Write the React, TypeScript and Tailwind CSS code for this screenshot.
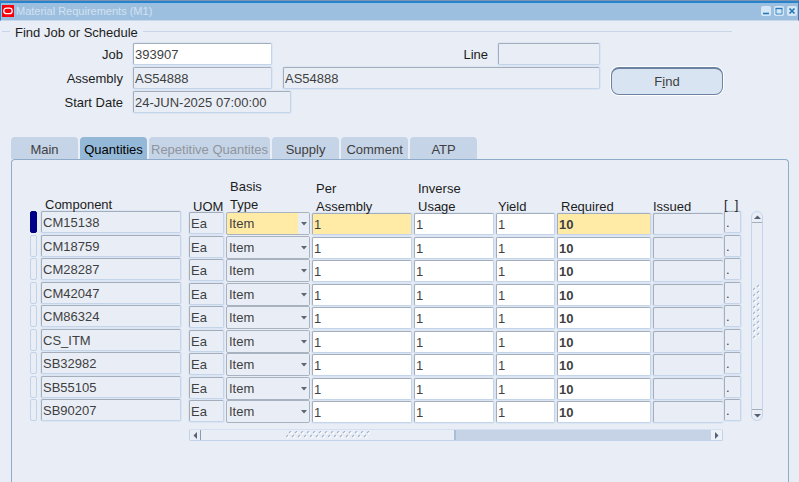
import { useState } from 'react'
import clsx from 'clsx'

const components = [
  'CM15138',
  'CM18759',
  'CM28287',
  'CM42047',
  'CM86324',
  'CS_ITM',
  'SB32982',
  'SB55105',
  'SB90207',
]

const tabs = [
  { label: 'Main' },
  { label: 'Quantities' },
  { label: 'Repetitive Quantites', disabled: true },
  { label: 'Supply' },
  { label: 'Comment' },
  { label: 'ATP' },
]

interface FieldProps {
  id?: string
  label?: string
  value?: string
  tone?: 'plain' | 'white' | 'required'
  className?: string
}

function Field({ id, label, value = '', tone = 'plain', className }: FieldProps) {
  return (
    <input
      id={id}
      type="text"
      aria-label={label}
      defaultValue={value}
      readOnly={tone === 'plain'}
      className={clsx(
        'block h-[22px] min-w-0 rounded-xs border border-t-[#a4adba] border-r-[#c4d5ea] border-b-[#c4d5ea] border-l-[#a4adba] px-px text-[#3f3f3f] shadow-[0_0_0_1px_#dbe5f3] outline-none',
        tone === 'plain' && 'bg-[#e9eef6]',
        tone === 'white' && 'bg-white',
        tone === 'required' && 'bg-[#ffeba6]',
        className
      )}
    />
  )
}

function BasisSelect({ label, required }: { label: string; required: boolean }) {
  return (
    <div className="relative -mb-px">
      <select
        aria-label={label}
        defaultValue="Item"
        className={clsx(
          'block h-[23px] w-full appearance-none rounded-xs border border-[#a9b2bf] pl-0.5 text-[#3f3f3f] outline-none',
          required ? 'bg-[#ffeba6]' : 'bg-[#e9eef6]'
        )}
      >
        <option>Item</option>
        <option>Lot</option>
      </select>
      <span className="pointer-events-none absolute inset-y-px right-px flex w-[11px] items-center justify-center bg-[#e9eef6]">
        <svg width="6" height="4" viewBox="0 0 6 4" aria-hidden="true">
          <path d="M0 0h6L3 3.5z" fill="#5d6675" />
        </svg>
      </span>
    </div>
  )
}

// Two staggered lines of notches on a scroll thumb
function Grip({ vertical }: { vertical?: boolean }) {
  const count = vertical ? 9 : 14
  const notches = Array.from({ length: count * 2 }, (_, i) => {
    const along = i * 3
    const across = i % 2 === 0 ? 4 : 0
    return vertical ? [across, along + 1] : [along, across]
  })
  return (
    <svg
      width={vertical ? 8 : 84}
      height={vertical ? 56 : 8}
      viewBox={vertical ? '0 0 8 56' : '0 0 84 8'}
      aria-hidden="true"
    >
      {notches.map(([x, y]) => (
        <g key={`${x}-${y}`}>
          <path d={`M${x + 1} ${y + 3}l2-2`} stroke="#fff" strokeWidth="1.4" />
          <path d={`M${x} ${y + 2}l2-2`} stroke="#a3b5cd" strokeWidth="1.1" />
        </g>
      ))}
    </svg>
  )
}

function Arrow({ path }: { path: string }) {
  return (
    <svg width="7" height="7" viewBox="0 0 7 7" aria-hidden="true">
      <path d={path} fill="#566175" />
    </svg>
  )
}

function TitleBar() {
  return (
    <header className="flex h-[21px] items-center border border-t-[#7f92ab] border-r-[#2f84c6] border-b-[#c9d9ec] border-l-[#2f84c6] bg-[#9dbfdf] px-px pt-px shadow-[inset_0_2px_0_#2583cf]">
      <svg width="12" height="12" viewBox="0 0 12 12" aria-hidden="true">
        <rect width="12" height="12" fill="#f5000b" />
        <rect x="1.8" y="3.2" width="8.4" height="5.4" rx="2.7" fill="none" stroke="#fff" strokeWidth="1.3" />
      </svg>
      <h1 className="ml-0.5 text-[11px] text-[#d3e1f1]">Material Requirements (M1)</h1>
      <div className="ml-auto flex gap-[3px]">
        <button type="button" aria-label="Minimize" className="size-[10px] rounded-xs bg-[#d5e7f6]">
          <svg width="10" height="10" viewBox="0 0 10 10" aria-hidden="true">
            <path d="M2 7.5h6" stroke="#2479ba" strokeWidth="1.6" />
          </svg>
        </button>
        <button type="button" aria-label="Maximize" className="size-[10px] rounded-xs bg-[#d5e7f6]">
          <svg width="10" height="10" viewBox="0 0 10 10" aria-hidden="true">
            <path d="M2 2.5h6v5.5h-6z" fill="none" stroke="#3b8ac6" />
            <path d="M1.5 2.5h7" stroke="#2479ba" strokeWidth="1.4" />
          </svg>
        </button>
        <button type="button" aria-label="Close" className="size-[10px] rounded-xs bg-[#d5e7f6]">
          <svg width="10" height="10" viewBox="0 0 10 10" aria-hidden="true">
            <path d="M2.5 2.5l5 5M7.5 2.5l-5 5" stroke="#2479ba" strokeWidth="1.7" />
          </svg>
        </button>
      </div>
    </header>
  )
}

function FindForm() {
  return (
    <fieldset className="mt-px mr-[67px] ml-0.5 border-t border-[#c9d6e9]">
      <legend className="ml-2 px-[5px] pt-[3px] leading-4">Find Job or Schedule</legend>
      <div className="flex items-start pt-0.5 pr-[9px]">
        <div className="flex flex-1 flex-col gap-0.5">
          <div className="flex items-center">
            <label htmlFor="job" className="w-[121px] pt-0.5 text-right">Job</label>
            <Field id="job" value="393907" tone="white" className="ml-[10px] w-[139px]" />
            <label htmlFor="line" className="ml-auto pt-0.5">Line</label>
            <Field id="line" className="ml-[10px] w-[102px]" />
          </div>
          <div className="flex items-center">
            <label htmlFor="assembly" className="w-[121px] pt-0.5 text-right">Assembly</label>
            <Field id="assembly" value="AS54888" className="ml-[10px] w-[139px]" />
            <Field label="Assembly description" value="AS54888" className="ml-[11px] flex-1" />
          </div>
          <div className="flex items-center">
            <label htmlFor="start-date" className="w-[121px] pt-0.5 text-right">Start Date</label>
            <Field id="start-date" value="24-JUN-2025 07:00:00" className="ml-[10px] w-[158px]" />
          </div>
        </div>
        <button
          type="button"
          className="mt-6 ml-[11px] h-7 w-[112px] rounded-lg border border-t-2 border-[#6c82a3] bg-[#d9e4f2] text-[#3f3f3f] shadow-[0_0_0_1px_#fff]"
        >
          F<u>i</u>nd
        </button>
      </div>
    </fieldset>
  )
}

const headClass = 'pl-1 text-left align-bottom font-normal'

function Lines({ text }: { text: string[] }) {
  return (
    <span className="flex flex-col gap-[10px] leading-2 whitespace-pre">
      {text.map((line) => (
        <span key={line}>{line}</span>
      ))}
    </span>
  )
}

function QuantitiesTable() {
  return (
    <table className="w-full table-fixed border-collapse">
      <colgroup>
        <col className="w-[11px]" />
        <col className="w-[148px]" />
        <col className="w-[37px]" />
        <col className="w-[86px]" />
        <col className="w-[102px]" />
        <col className="w-[82px]" />
        <col className="w-[61px]" />
        <col className="w-[96px]" />
        <col className="w-[71px]" />
        <col className="w-[17px]" />
      </colgroup>
      <thead>
        <tr className="h-[34px]">
          <td />
          <th className="pb-0.5 pl-1 text-left align-bottom font-normal"><Lines text={['Component']} /></th>
          <th className={headClass}><Lines text={['UOM']} /></th>
          <th className="pb-0.5 pl-1 text-left align-bottom font-normal"><Lines text={['Basis', 'Type']} /></th>
          <th className={headClass}><Lines text={['Per', 'Assembly']} /></th>
          <th className={headClass}><Lines text={['Inverse', 'Usage']} /></th>
          <th className="pl-0.5 text-left align-bottom font-normal"><Lines text={['Yield']} /></th>
          <th className={headClass}><Lines text={['Required']} /></th>
          <th className="text-left align-bottom font-normal"><Lines text={['Issued']} /></th>
          <th className="pb-0.5 text-left align-bottom font-normal"><Lines text={['[  ]']} /></th>
        </tr>
      </thead>
      <tbody className="align-top">
        {components.map((name, index) => {
          const current = index === 0
          return (
            <tr key={name} className="odd:h-6 even:h-[23px]">
              <td className="pr-1">
                <button
                  type="button"
                  aria-label={`Select ${name}`}
                  className={clsx(
                    'block h-[22px] w-full rounded-xs border',
                    current ? 'border-[#00007c] bg-[#00008b]' : 'border-[#c1d2e9]'
                  )}
                />
              </td>
              <td className="pr-2"><Field label="Component" value={name} className="w-full" /></td>
              <td className="pt-px pr-0.5"><Field label="UOM" value="Ea" className="w-full" /></td>
              <td className="pt-px pr-0.5"><BasisSelect label="Basis type" required={current} /></td>
              <td className="pt-0.5 pr-0.5">
                <Field label="Per assembly" value="1" tone={current ? 'required' : 'white'} className="-mb-px w-full" />
              </td>
              <td className="pt-0.5 pr-0.5">
                <Field label="Inverse usage" value="1" tone="white" className="-mb-px w-full" />
              </td>
              <td className="pt-0.5 pr-0.5">
                <Field label="Yield" value="1" tone="white" className="-mb-px w-full" />
              </td>
              <td className="pt-0.5 pr-0.5">
                <Field
                  label="Required"
                  value="10"
                  tone={current ? 'required' : 'white'}
                  className="-mb-px w-full font-bold"
                />
              </td>
              <td className="pt-0.5 pr-px"><Field label="Issued" className="-mb-px w-full border-r-0" /></td>
              <td><Field label="Flexfield" value="." className="w-full" /></td>
            </tr>
          )
        })}
      </tbody>
      <tfoot>
        <tr>
          <td colSpan={2} />
          <td colSpan={7} className="pt-[6px] pr-px">
            <div className="flex h-3 rounded-xs border border-t-[#d3e1f2] border-r-[#c1d2e9] border-b-[#c1d2e9] border-l-[#c1d2e9] bg-[#c6d3e6]">
              <button type="button" aria-label="Scroll left" className="flex w-[11px] items-center justify-center border-r border-[#8c9bb0] bg-[#e9eef6]">
                <Arrow path="M5 0v7L1.5 3.5z" />
              </button>
              <div className="flex w-[48%] items-center justify-center border-r-2 border-[#a9bdd6] bg-[#e9eef6]">
                <Grip />
              </div>
              <button type="button" aria-label="Scroll right" className="ml-auto flex w-[11px] items-center justify-center bg-[#edf2f9]">
                <Arrow path="M2 0v7l3.5-3.5z" />
              </button>
            </div>
          </td>
          <td />
        </tr>
      </tfoot>
    </table>
  )
}

function VerticalScroll() {
  return (
    <div className="mt-[34px] ml-[10px] flex h-[210px] w-3 flex-col rounded-full border border-[#c4d4ea] bg-[#e9eef6]">
      <button type="button" aria-label="Scroll up" className="flex h-[11px] items-center justify-center border-b border-[#a4adba]">
        <Arrow path="M0 5h7L3.5 1.5z" />
      </button>
      <div className="flex flex-1 items-center justify-center pb-2">
        <Grip vertical />
      </div>
      <button type="button" aria-label="Scroll down" className="flex h-[11px] items-center justify-center border-t border-[#a4adba]">
        <Arrow path="M0 2h7L3.5 5.5z" />
      </button>
    </div>
  )
}

export default function App() {
  const [active, setActive] = useState('Quantities')

  return (
    <div className="flex min-h-screen flex-col bg-[#e9eef6] font-['Liberation_Sans',Arial,sans-serif] text-[13px] leading-4 text-[#1c1c1c]">
      <TitleBar />
      <FindForm />

      <div role="tablist" className="mt-6 ml-[11px] flex gap-0.5">
        {tabs.map((tab) => (
          <button
            key={tab.label}
            type="button"
            role="tab"
            aria-selected={tab.label === active}
            disabled={tab.disabled}
            onClick={() => setActive(tab.label)}
            className={clsx(
              'h-[22px] min-w-[67px] rounded-t-sm px-0.5 pt-[3px]',
              tab.label === active && 'bg-[#94b8d8] text-black',
              tab.label !== active && 'bg-[#c6d4e7]',
              tab.label !== active && (tab.disabled ? 'text-[#8f959d]' : 'text-[#3f3f3f]')
            )}
          >
            {tab.label}
          </button>
        ))}
      </div>

      {/* Tab page runs off the bottom of the window */}
      <main className="mr-[10px] ml-[11px] flex flex-1 items-start rounded-t-sm border border-b-0 border-[#8eacc9] pt-[17px] pr-[25px] pl-[18px]">
        <div className="min-w-0 flex-1">
          <QuantitiesTable />
        </div>
        <VerticalScroll />
      </main>
    </div>
  )
}
